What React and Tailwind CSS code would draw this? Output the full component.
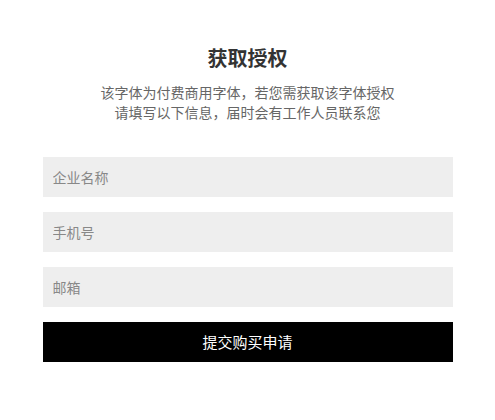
export default function App() {
  const font = { fontFamily: '"Noto Sans CJK SC", "Noto Sans", sans-serif' };
  return (
    <div className="min-h-[420px] bg-white" style={font}>
      <div className="mx-auto w-[410px] pt-[44px] flex flex-col">
        <h1 className="text-center text-[20px] leading-[28px] font-bold text-[#333]">获取授权</h1>
        <p className="mt-[10px] text-center text-[14px] leading-[20px] text-[#666]">
          该字体为付费商用字体，若您需获取该字体授权
          <br />
          请填写以下信息，届时会有工作人员联系您
        </p>
        <div className="mt-[35px] flex flex-col gap-[15px]">
          <input className="h-[40px] w-full bg-[#eeeeee] px-[10px] text-[14px] text-[#333] placeholder-[#888] outline-none" placeholder="企业名称" />
          <input className="h-[40px] w-full bg-[#eeeeee] px-[10px] text-[14px] text-[#333] placeholder-[#888] outline-none" placeholder="手机号" />
          <input className="h-[40px] w-full bg-[#eeeeee] px-[10px] text-[14px] text-[#333] placeholder-[#888] outline-none" placeholder="邮箱" />
          <button className="h-[40px] w-full bg-black text-white text-[15px]">提交购买申请</button>
        </div>
      </div>
    </div>
  );
}
